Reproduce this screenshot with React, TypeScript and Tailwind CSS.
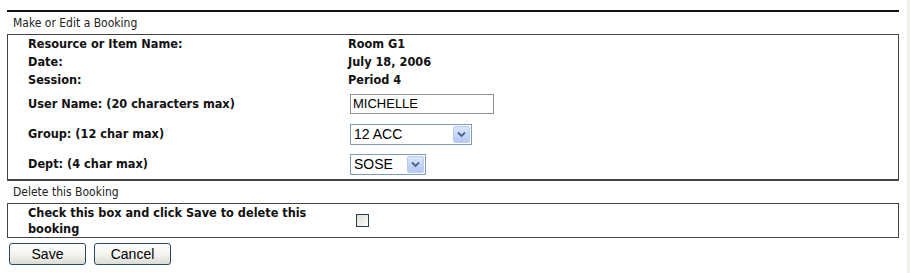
import React from "react";

const tahoma = { fontFamily: '"DejaVu Sans Condensed", "DejaVu Sans", sans-serif' };

function Chevron() {
  return (
    <svg width="9" height="7" viewBox="0 0 9 7">
      <path d="M1 1.5 L4.5 5 L8 1.5" fill="none" stroke="#4d6185" strokeWidth="1.8" />
    </svg>
  );
}

function XpSelect({ value, width }: { value: string; width: string }) {
  return (
    <div className={`flex h-[21px] ${width} items-stretch border border-[#7f9db9] bg-white p-px`}>
      <div className="flex flex-1 items-center pl-[2px] font-['Liberation_Sans',Arial,sans-serif] text-[14px] font-normal text-black">
        {value}
      </div>
      <div className="flex w-[17px] items-center justify-center rounded-[2px] border border-[#b9cbf3] bg-gradient-to-b from-[#dbe5fd] to-[#b4c8f6]">
        <Chevron />
      </div>
    </div>
  );
}

function XpButton({ label }: { label: string }) {
  return (
    <button className="flex h-[22px] w-[77px] items-center justify-center rounded-[3px] border border-[#274a6b] bg-gradient-to-b from-white via-[#f4f4f0] to-[#dcdcd4] font-['Liberation_Sans',Arial,sans-serif] text-[14px] text-black">
      {label}
    </button>
  );
}

export default function App() {
  return (
    <div className="relative h-[273px] w-[910px] overflow-hidden bg-white pl-[7px] pt-[10px]" style={tahoma}>
      <div className="w-[892px]">
        <div className="h-[2px] bg-[#111]" />
        <div className="flex h-[22px] items-center pl-[6px] text-[12px] text-[#222]">Make or Edit a Booking</div>

        <div className="border border-b-2 border-[#454545] pl-[20px] text-[12.6px] font-bold text-[#111]">
          <div className="grid grid-cols-[320px_1fr]">
            <div className="flex h-[18px] items-center">Resource or Item Name:</div>
            <div className="flex h-[18px] items-center">Room G1</div>
            <div className="flex h-[18px] items-center">Date:</div>
            <div className="flex h-[18px] items-center">July 18, 2006</div>
            <div className="flex h-[18px] items-center">Session:</div>
            <div className="flex h-[18px] items-center">Period 4</div>

            <div className="flex h-[30px] items-center">User Name: (20 characters max)</div>
            <div className="flex h-[30px] items-center pl-[2px]">
              <div className="flex h-[20px] w-[144px] items-center border border-[#8a9097] pl-[2px] font-['Liberation_Sans',Arial,sans-serif] text-[13px] font-normal text-black">
                MICHELLE
              </div>
            </div>

            <div className="flex h-[30px] items-center">Group: (12 char max)</div>
            <div className="flex h-[30px] items-center pl-[2px]">
              <XpSelect value="12 ACC" width="w-[122px]" />
            </div>

            <div className="flex h-[30px] items-center">Dept: (4 char max)</div>
            <div className="flex h-[30px] items-center pl-[2px]">
              <XpSelect value="SOSE" width="w-[76px]" />
            </div>
          </div>
        </div>

        <div className="flex h-[22px] items-center pl-[6px] text-[12px] text-[#222]">Delete this Booking</div>

        <div className="grid h-[35px] grid-cols-[320px_1fr] items-center border border-[#454545] pl-[20px] text-[12.6px] font-bold leading-[16px] text-[#111]">
          <div className="w-[300px]">Check this box and click Save to delete this booking</div>
          <div className="pl-[8px]">
            <div className="h-[13px] w-[13px] border border-[#2a3d52] bg-gradient-to-br from-[#dcdcd7] to-white" />
          </div>
        </div>

        <div className="mt-[5px] flex gap-[8px] pl-[2px]">
          <XpButton label="Save" />
          <XpButton label="Cancel" />
        </div>
      </div>
      <div className="absolute right-0 top-0 h-full w-[3px] bg-[#f1efe9]" />
    </div>
  );
}
